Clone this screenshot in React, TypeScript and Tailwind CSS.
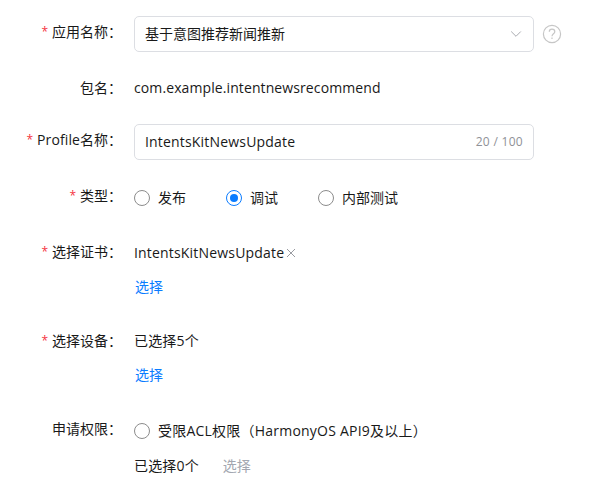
import React from 'react';

function Label({ children, required }: { children: React.ReactNode; required?: boolean }) {
  return (
    <div className="flex w-[122px] shrink-0 justify-end whitespace-nowrap">
      {required && <span className="mr-1 text-[12px] text-[#f5333f]">*</span>}
      <span>{children}</span>
      <span className="w-[14px]">：</span>
    </div>
  );
}

function Radio({ checked }: { checked?: boolean }) {
  return (
    <span
      className={
        checked
          ? 'flex size-4 items-center justify-center rounded-full border border-[#0a7cff]'
          : 'size-4 rounded-full border border-[#8c8c8c]'
      }
    >
      {checked && <span className="size-2 rounded-full bg-[#0a7cff]" />}
    </span>
  );
}

export default function App() {
  return (
    <div className="h-[503px] w-[589px] overflow-hidden bg-white pt-4 font-['Open_Sans','Noto_Sans_CJK_SC',sans-serif] text-[14px] leading-5 text-[#191919]">
      <div className="flex h-9 items-start">
        <div className="pt-1.5"><Label required>应用名称</Label></div>
        <div className="ml-3 flex h-9 w-[400px] items-center justify-between rounded-[5px] border border-[#dcdee3] px-[10px]">
          <span>基于意图推荐新闻推新</span>
          <svg className="mr-px size-3" viewBox="0 0 12 12" fill="none" stroke="#a9abb0">
            <path d="M1.2 3.5L6 8.3l4.8-4.8" />
          </svg>
        </div>
        <svg className="mt-2 ml-2 size-5" viewBox="0 0 20 20" fill="none" stroke="#c6c6c6" strokeWidth="1.2">
          <circle cx="10" cy="10" r="8.6" />
          <path d="M7.3 7.8C7.3 6.2 8.4 5.2 10 5.2s2.8 1 2.8 2.5c0 2-2.8 2.2-2.8 4.5M10 13.6v1.4" />
        </svg>
      </div>
      <div className="mt-6 flex h-6 items-center">
        <Label>包名</Label>
        <span className="ml-3 tracking-[0.1px]">com.example.intentnewsrecommend</span>
      </div>
      <div className="mt-6 flex h-9 items-start">
        <div className="pt-1.5"><Label required><span className="tracking-[0.1px]">Profile</span>名称</Label></div>
        <div className="ml-3 flex h-9 w-[400px] items-center justify-between rounded-[5px] border border-[#dcdee3] px-[10px]">
          <span className="tracking-[0.18px]">IntentsKitNewsUpdate</span>
          <span className="text-[12px] tracking-[0.3px] text-[#8f9197]">20 / 100</span>
        </div>
      </div>
      <div className="mt-[26px] flex h-6 items-start">
        <Label required>类型</Label>
        <div className="ml-3 flex h-6 items-center gap-2"><Radio />发布</div>
        <div className="ml-10 flex h-6 items-center gap-2"><Radio checked />调试</div>
        <div className="ml-10 flex h-6 items-center gap-2"><Radio />内部测试</div>
      </div>
      <div className="mt-8 flex items-start">
        <Label required>选择证书</Label>
        <div className="ml-3">
          <div className="flex items-center pt-px">
            <span className="tracking-[0.18px]">IntentsKitNewsUpdate</span>
            <svg className="ml-0.5 size-[10px]" viewBox="0 0 10 10" fill="none" stroke="#8f9197" strokeWidth="0.9">
              <path d="M1 1l8 8M9 1L1 9" />
            </svg>
          </div>
          <div className="mt-3.5 pl-px text-[#0a7cff]">选择</div>
        </div>
      </div>
      <div className="mt-[34px] flex items-start">
        <Label required>选择设备</Label>
        <div className="ml-3">
          <div className="tracking-[0.16px]">已选择5个</div>
          <div className="mt-3.5 pl-px text-[#0a7cff]">选择</div>
        </div>
      </div>
      <div className="mt-[34px] flex items-start">
        <Label>申请权限</Label>
        <div className="ml-3">
          <div className="flex h-6 items-center gap-2">
            <Radio />
            <span className="tracking-[0.22px]">受限ACL权限（HarmonyOS API9及以上）</span>
          </div>
          <div className="mt-[13px] flex items-center">
            <span className="tracking-[0.16px]">已选择0个</span>
            <span className="ml-6 text-[#a3a7b0]">选择</span>
          </div>
        </div>
      </div>
    </div>
  );
}
